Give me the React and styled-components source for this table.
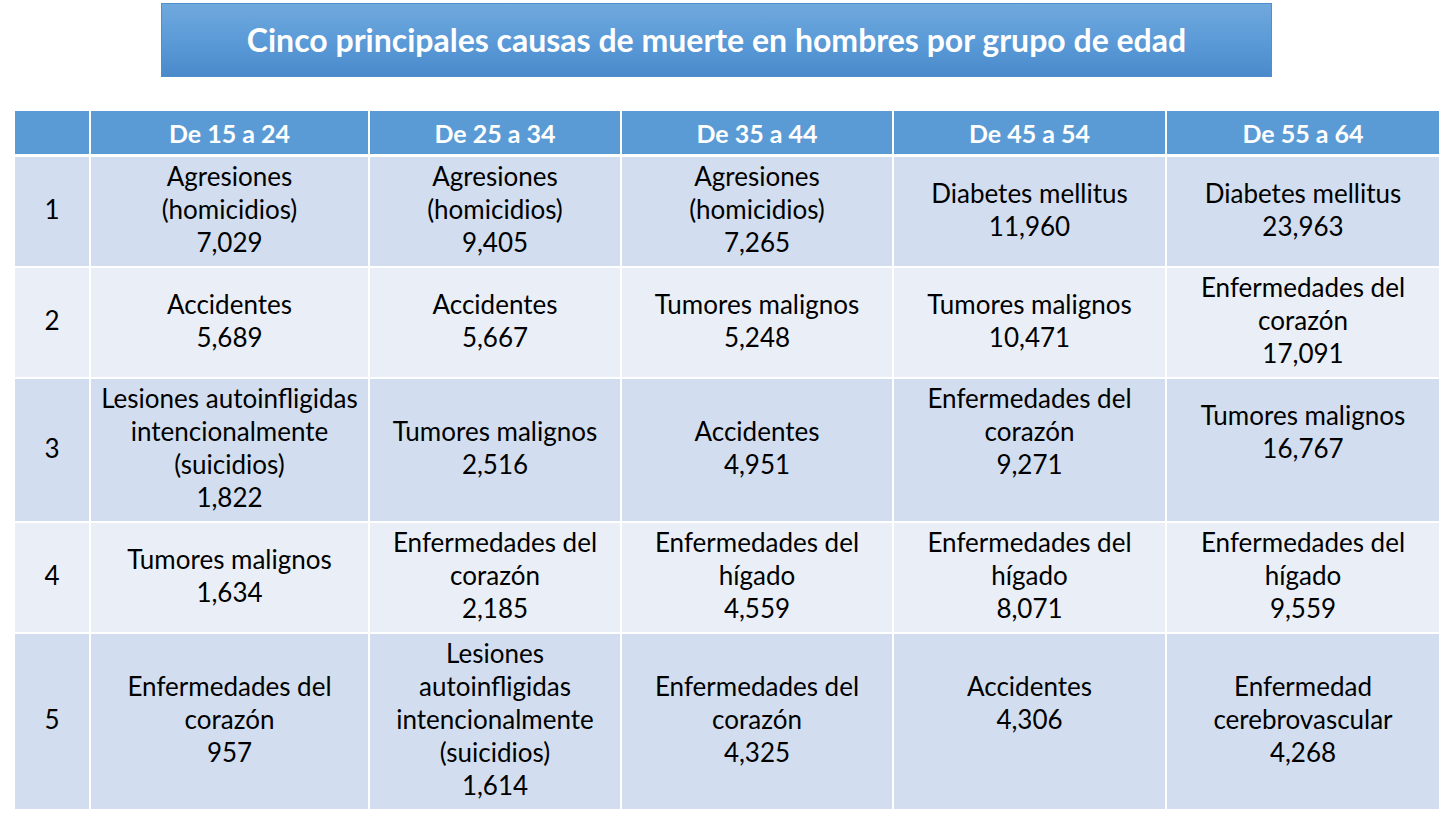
import React from 'react'
import styled, { createGlobalStyle } from 'styled-components'

const GlobalStyle = createGlobalStyle`
  body {
    margin: 0;
    background: #ffffff;
    font-family: Lato, "Open Sans", sans-serif;
  }
`;

const Page = styled.div`
  width: 1453px;
  height: 818px;
  padding-top: 3px;
  box-sizing: border-box;
  display: flex;
  flex-direction: column;
  align-items: flex-start;
`;

const Banner = styled.div`
  width: 1111px;
  height: 74px;
  margin-left: 161px;
  box-sizing: border-box;
  border: 1px solid #4f8fcf;
  background: linear-gradient(to bottom, #70a8dc 0%, #5b9bd8 50%, #4a8acb 100%);
  display: flex;
  align-items: center;
  justify-content: center;
  color: #ffffff;
  font-weight: 700;
  font-size: 32px;
  padding-bottom: 1px;
`;

const Table = styled.table`
  margin-top: 34px;
  margin-left: 15px;
  width: 1424px;
  border-collapse: collapse;
  table-layout: fixed;
`;

const HeadCell = styled.th`
  background: #5b9bd5;
  color: #ffffff;
  font-weight: 700;
  font-size: 25px;
  height: 43px;
  padding: 0;
  text-align: center;
  border-left: 2px solid #ffffff;
  border-right: 2px solid #ffffff;
  border-bottom: 3px solid #ffffff;
  &:first-child { border-left: none; }
  &:last-child { border-right: none; }
`;

const Row = styled.tr`
  background: ${p => (p.$odd ? '#d2deef' : '#eaeff7')};
  height: ${p => p.$h}px;
`;

const Cell = styled.td`
  color: #000000;
  font-size: 26px;
  line-height: 33px;
  padding: 0 4px;
  padding-bottom: ${p => (p.$lift ? '36px' : '3px')};
  text-align: center;
  vertical-align: middle;
  border: 2px solid #ffffff;
  border-top: none;
  &:first-child { border-left: none; }
  &:last-child { border-right: none; }
`;

const columns = ['De 15 a 24', 'De 25 a 34', 'De 35 a 44', 'De 45 a 54', 'De 55 a 64'];
const widths = [75, 279, 252, 272, 273, 273];

const rows = [
  {
    h: 111,
    cells: [
      ['Agresiones', '(homicidios)', '7,029'],
      ['Agresiones', '(homicidios)', '9,405'],
      ['Agresiones', '(homicidios)', '7,265'],
      ['Diabetes mellitus', '11,960'],
      ['Diabetes mellitus', '23,963'],
    ],
  },
  {
    h: 111,
    cells: [
      ['Accidentes', '5,689'],
      ['Accidentes', '5,667'],
      ['Tumores malignos', '5,248'],
      ['Tumores malignos', '10,471'],
      ['Enfermedades del', 'corazón', '17,091'],
    ],
  },
  {
    h: 144,
    cells: [
      ['Lesiones autoinfligidas', 'intencionalmente', '(suicidios)', '1,822'],
      ['Tumores malignos', '2,516'],
      ['Accidentes', '4,951'],
      ['Enfermedades del', 'corazón', '9,271'],
      ['Tumores malignos', '16,767'],
    ],
    lift: [false, false, false, true, true],
  },
  {
    h: 111,
    cells: [
      ['Tumores malignos', '1,634'],
      ['Enfermedades del', 'corazón', '2,185'],
      ['Enfermedades del', 'hígado', '4,559'],
      ['Enfermedades del', 'hígado', '8,071'],
      ['Enfermedades del', 'hígado', '9,559'],
    ],
  },
  {
    h: 177,
    cells: [
      ['Enfermedades del', 'corazón', '957'],
      ['Lesiones', 'autoinfligidas', 'intencionalmente', '(suicidios)', '1,614'],
      ['Enfermedades del', 'corazón', '4,325'],
      ['Accidentes', '4,306'],
      ['Enfermedad', 'cerebrovascular', '4,268'],
    ],
    lift: [false, false, false, true, false],
  },
];

export default function App() {
  return (
    <>
      <GlobalStyle />
      <Page>
        <Banner>Cinco principales causas de muerte en hombres por grupo de edad</Banner>
        <Table>
          <colgroup>
            {widths.map((w, i) => <col key={i} style={{ width: w }} />)}
          </colgroup>
          <thead>
            <tr>
              <HeadCell />
              {columns.map(c => <HeadCell key={c}>{c}</HeadCell>)}
            </tr>
          </thead>
          <tbody>
            {rows.map((r, i) => (
              <Row key={i} $odd={i % 2 === 0} $h={r.h}>
                <Cell>{i + 1}</Cell>
                {r.cells.map((lines, j) => (
                  <Cell key={j} $lift={r.lift && r.lift[j]}>
                    {lines.map((l, k) => <div key={k}>{l}</div>)}
                  </Cell>
                ))}
              </Row>
            ))}
          </tbody>
        </Table>
      </Page>
    </>
  )
}
